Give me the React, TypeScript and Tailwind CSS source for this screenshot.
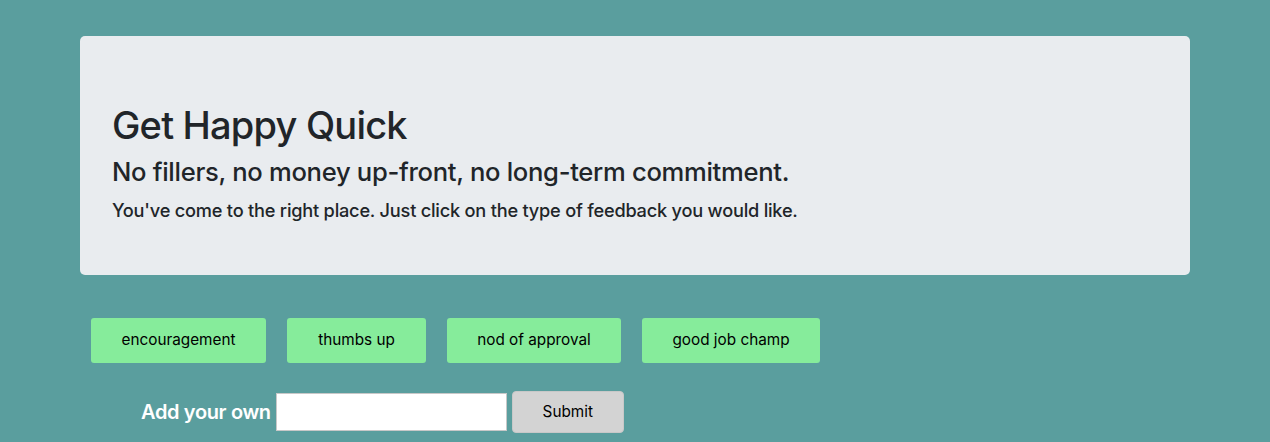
const feedback = [
  { label: "encouragement", w: "w-[175px]" },
  { label: "thumbs up", w: "w-[139px]" },
  { label: "nod of approval", w: "w-[174px]" },
  { label: "good job champ", w: "w-[178px]" },
];

export default function App() {
  return (
    <div className="min-h-screen bg-[#5a9e9e] font-['Inter',sans-serif] text-[#212529]">
      <div className="mx-auto max-w-[1140px] px-[15px] pt-[36px]">
        <div className="rounded-[5px] bg-[#e9ecef] px-[32px] pt-[65px] pb-[54px]">
          <h1 className="text-[38px] font-medium leading-[48px] tracking-[-0.8px]">Get Happy Quick</h1>
          <h3 className="mt-[8px] text-[25.6px] font-medium leading-[30px] tracking-[-0.3px]">
            No fillers, no money up-front, no long-term commitment.
          </h3>
          <h5 className="mt-[12px] text-[18.2px] font-medium leading-[22px] tracking-[-0.22px]">
            You've come to the right place. Just click on the type of feedback you would like.
          </h5>
        </div>

        <div className="mt-[43px] flex gap-[21px] pl-[11px]">
          {feedback.map((f) => (
            <button
              key={f.label}
              className={`${f.w} h-[45px] rounded-[3px] bg-[#86ec9b] text-[15.3px] text-black`}
            >
              {f.label}
            </button>
          ))}
        </div>

        <div className="mt-[28px] flex items-center pl-[61px]">
          <span className="mr-[5px] text-[20px] font-semibold tracking-[-0.35px] text-white">Add your own</span>
          <input className="h-[38px] w-[231px] border border-[#c8c8c8] bg-white" />
          <button className="ml-[5px] h-[42px] w-[112px] rounded-[4px] border border-[#c8c8c8] bg-[#d3d3d3] text-[15.3px] text-black">
            Submit
          </button>
        </div>
      </div>
    </div>
  );
}
